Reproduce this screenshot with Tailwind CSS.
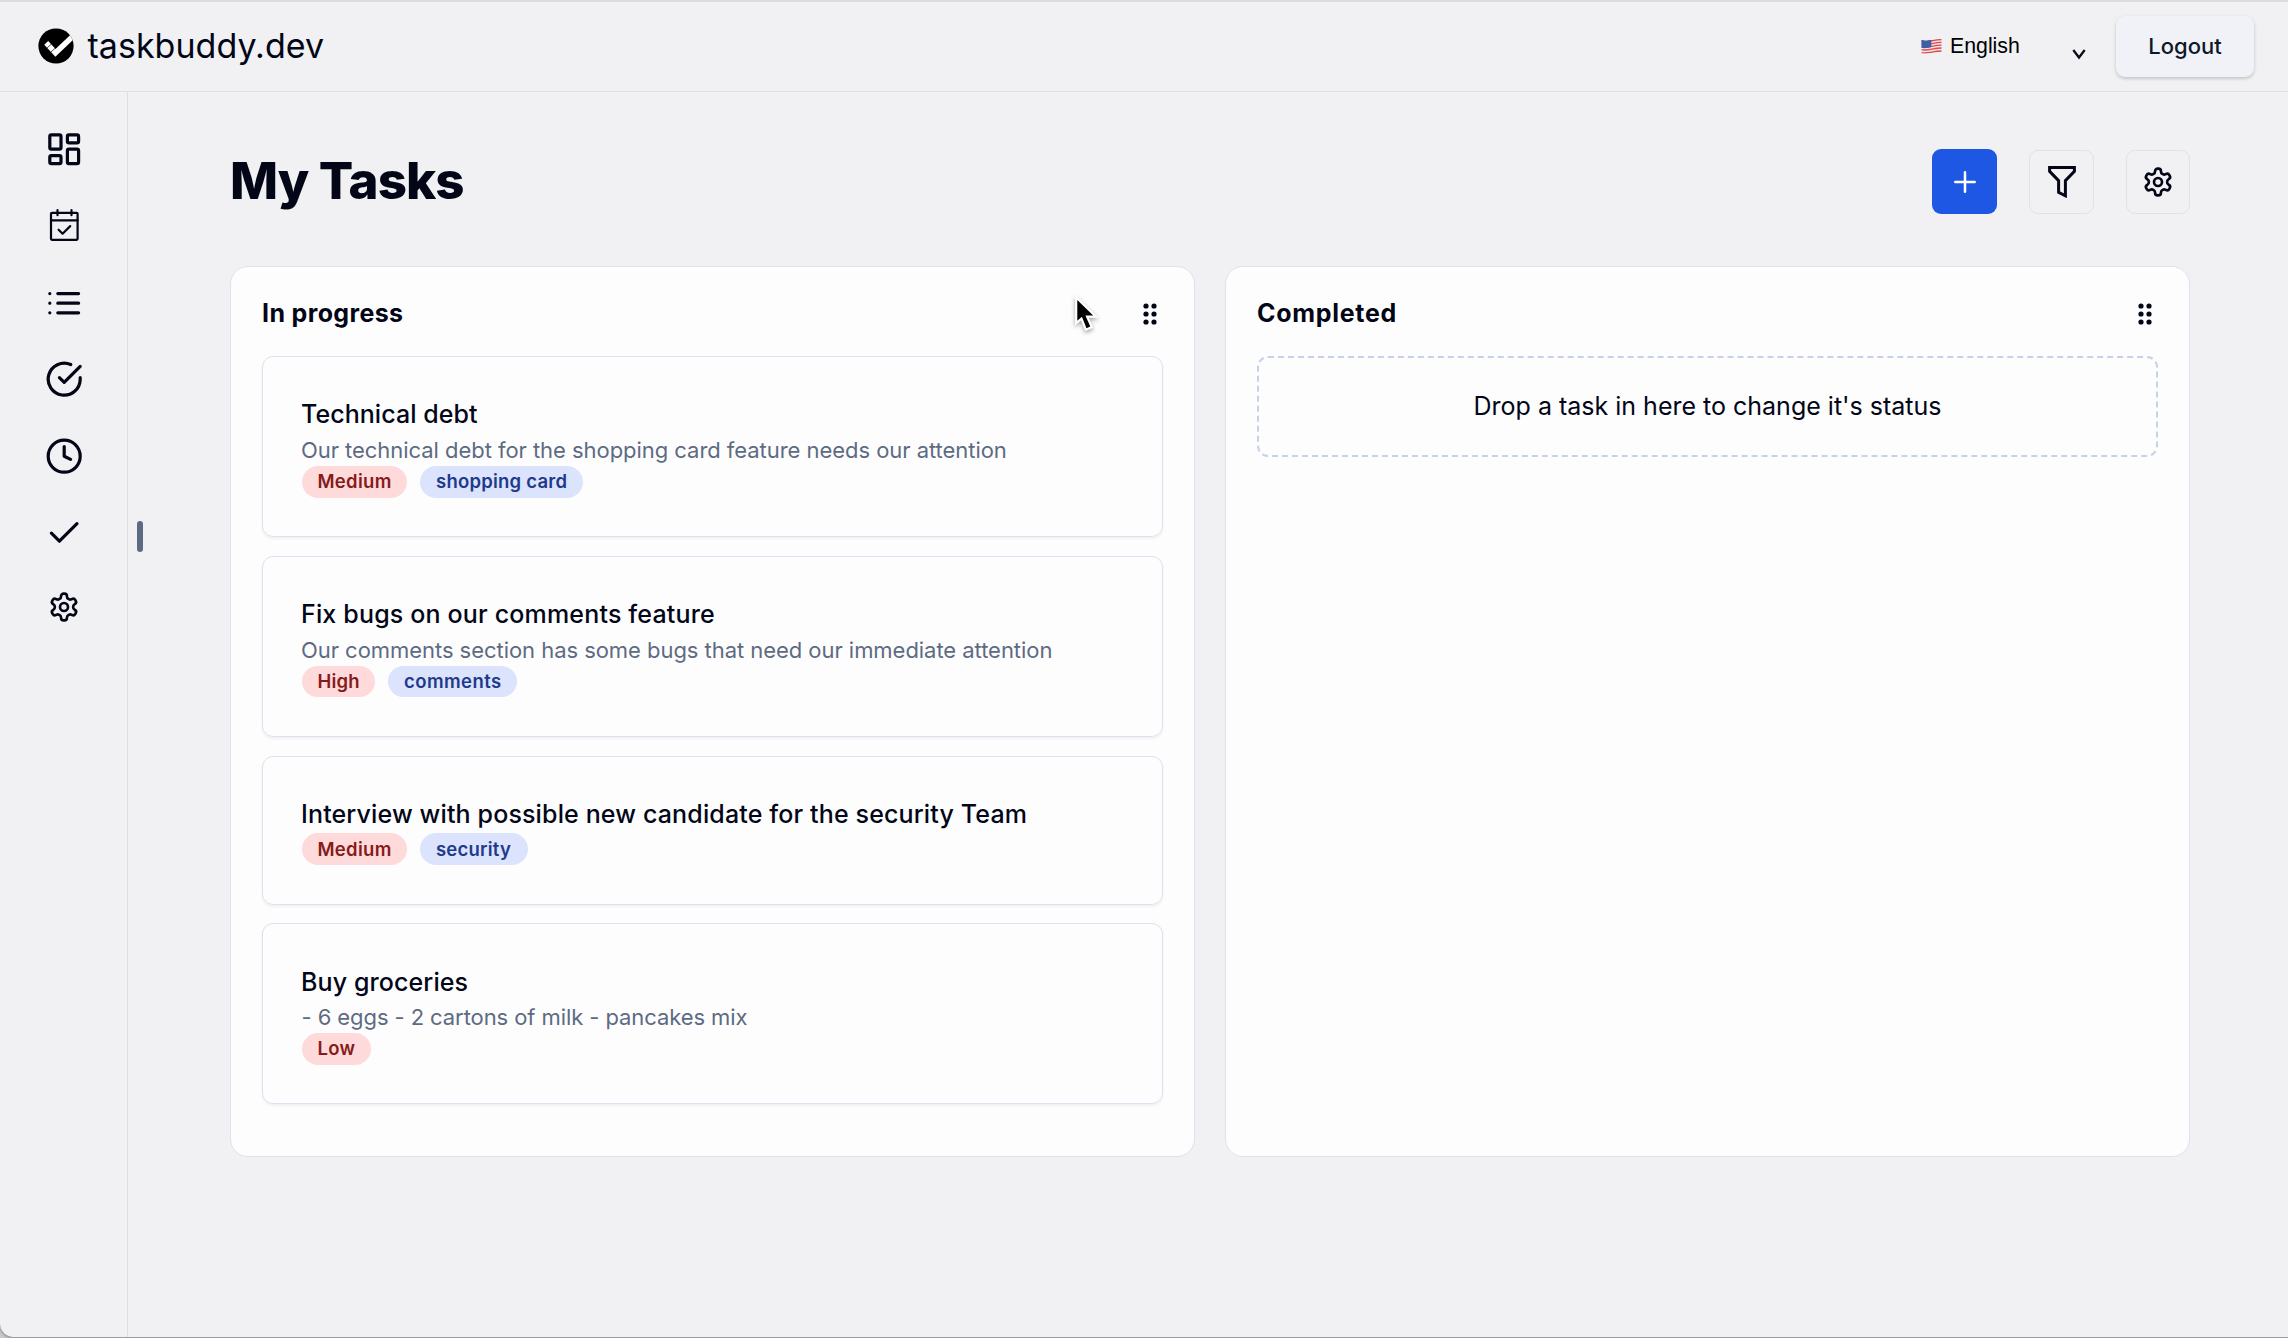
<!DOCTYPE html>
<html lang="en">
<head>
<meta charset="utf-8">
<title>taskbuddy.dev</title>
<script src="https://cdn.jsdelivr.net/npm/@tailwindcss/browser@4"></script>
</head>
<body class="bg-[#c9c9cb] font-['Inter',sans-serif] text-[#020617]">
<svg class="hidden">
  <symbol id="gear" viewBox="0 0 24 24"><path d="M12.22 2h-.44a2 2 0 0 0-2 2v.18a2 2 0 0 1-1 1.73l-.43.25a2 2 0 0 1-2 0l-.15-.08a2 2 0 0 0-2.73.73l-.22.38a2 2 0 0 0 .73 2.73l.15.1a2 2 0 0 1 1 1.72v.51a2 2 0 0 1-1 1.74l-.15.09a2 2 0 0 0-.73 2.73l.22.38a2 2 0 0 0 2.73.73l.15-.08a2 2 0 0 1 2 0l.43.25a2 2 0 0 1 1 1.73V20a2 2 0 0 0 2 2h.44a2 2 0 0 0 2-2v-.18a2 2 0 0 1 1-1.73l.43-.25a2 2 0 0 1 2 0l.15.08a2 2 0 0 0 2.73-.73l.22-.39a2 2 0 0 0-.73-2.73l-.15-.08a2 2 0 0 1-1-1.74v-.5a2 2 0 0 1 1-1.74l.15-.09a2 2 0 0 0 .73-2.73l-.22-.38a2 2 0 0 0-2.73-.73l-.15.08a2 2 0 0 1-2 0l-.43-.25a2 2 0 0 1-1-1.73V4a2 2 0 0 0-2-2z"/><circle cx="12" cy="12" r="3"/></symbol>
  <symbol id="grip" viewBox="0 0 16 24"><g fill="currentColor" stroke="none"><circle cx="4" cy="4" r="2.6"/><circle cx="12" cy="4" r="2.6"/><circle cx="4" cy="12" r="2.6"/><circle cx="12" cy="12" r="2.6"/><circle cx="4" cy="20" r="2.6"/><circle cx="12" cy="20" r="2.6"/></g></symbol>
</svg>
<div class="relative flex h-[1338px] w-[2288px] flex-col overflow-hidden rounded-bl-[14px] border-b border-[#9c9c9e] bg-[#f1f1f3] shadow-[0_0_3px_#777]">
  <header class="flex h-[92px] shrink-0 items-center border-t-2 border-b border-t-[#dcdcde] border-b-[#dfdfe2] pl-[38px] pr-[34px]">
    <svg class="-mt-[1px] size-[36px]" viewBox="0 0 36 36"><defs><clipPath id="disc"><circle cx="18" cy="18" r="17.6"/></clipPath></defs><circle cx="18" cy="18" r="17.6" fill="#000"/><g clip-path="url(#disc)"><path d="M8.2 14.8 17.5 24.8 36 7.2" fill="none" stroke="#fff" stroke-width="5.4"/><path d="M8.5 20.5 15 14.5M12.5 24.5 19.5 18" stroke="#000" stroke-width=".7"/></g></svg>
    <span class="ml-[13.5px] -mt-[1px] text-[34px] leading-[40px] tracking-[0.03px]">taskbuddy.dev</span>
    <div class="ml-auto flex items-center">
      <svg class="mr-[8px] -mt-[2px] h-[16px] w-[21px]" viewBox="0 0 21 16"><defs><clipPath id="flag"><path d="M.5 1.8C7 3.8 12 .2 20.5.7V14.2C13 13.6 8 17 .5 15.2Z"/></clipPath></defs><g clip-path="url(#flag)"><path fill="#f3e4e6" d="M0 0h21v16H0z"/><path d="M0 3.2C7 5 12 1.4 21 1.6M0 6C7 7.8 12 4.2 21 4.4M0 8.8C7 10.6 12 7 21 7.2M0 11.6C7 13.4 12 9.8 21 10M0 14.6C7 16.2 12 12.8 21 13" fill="none" stroke="#dc4a50" stroke-width="1.35"/><path d="M0 1.2C4 3 7 1.9 10.3 1.2V9C7 9.8 4 10.6 0 9.8Z" fill="#3b5fa8"/></g></svg>
      <span class="-mt-[1px] w-[122px] font-['Liberation_Sans',sans-serif] text-[21.3px] leading-[26px] text-black">English</span>
      <svg class="mt-[14px] h-[12px] w-[14px]" viewBox="0 0 14 12" fill="none" stroke="#0b0d1a" stroke-width="2.3"><path d="M1.3 2 7 9.5 12.7 2"/></svg>
      <button class="ml-[30px] h-[61px] w-[138px] rounded-[9px] bg-[#f1f2f7] text-[22px] font-medium text-[#0f172a] shadow-[0_1px_5px_rgba(0,0,0,0.08),0_2px_3px_rgba(0,0,0,0.12)]">Logout</button>
    </div>
  </header>
  <div class="flex flex-1">
    <nav class="flex w-[128px] shrink-0 flex-col items-center border-r border-[#dfdfe2] pl-[1px] [&>svg]:shrink-0">
      <svg class="mt-[38px] size-[38.4px]" viewBox="0 0 24 24" fill="none" stroke="currentColor" stroke-width="2" stroke-linecap="round" stroke-linejoin="round"><rect x="3" y="3" width="7" height="9" rx="1"/><rect x="14" y="3" width="7" height="5" rx="1"/><rect x="14" y="12" width="7" height="9" rx="1"/><rect x="3" y="16" width="7" height="5" rx="1"/></svg>
      <svg class="mt-[40px] h-[34px] w-[32px]" viewBox="0 0 32 34" fill="none" stroke="currentColor" stroke-width="2.2" stroke-linecap="round" stroke-linejoin="round"><rect x="3" y="4.8" width="26.6" height="27" rx="1"/><path d="M3 12.3h26.6M9.5 2.2v5M23.5 2.2v5M10.6 21.7l4 4 7.6-7.6"/></svg>
      <svg class="mt-[41.5px] size-[38.4px]" viewBox="0 0 24 24" fill="none" stroke="currentColor" stroke-width="2" stroke-linecap="round" stroke-linejoin="round"><path d="M8 6h13M8 12h13M8 18h13M3 6h.01M3 12h.01M3 18h.01"/></svg>
      <svg class="mt-[37.6px] size-[38.4px]" viewBox="0 0 24 24" fill="none" stroke="currentColor" stroke-width="2" stroke-linecap="round" stroke-linejoin="round"><path d="M22 11.08V12a10 10 0 1 1-5.93-9.14"/><path d="m9 11 3 3L22 4"/></svg>
      <svg class="mt-[38.6px] size-[38.4px]" viewBox="0 0 24 24" fill="none" stroke="currentColor" stroke-width="2" stroke-linecap="round" stroke-linejoin="round"><circle cx="12" cy="12" r="10"/><path d="M12 6v6l4 2"/></svg>
      <svg class="mt-[39px] size-[38.4px]" viewBox="0 0 24 24" fill="none" stroke="currentColor" stroke-width="2" stroke-linecap="round" stroke-linejoin="round"><path d="M20 6 9 17l-5-5"/></svg>
      <svg class="mt-[38px] size-[32px] fill-none stroke-current stroke-2 [stroke-linecap:round] [stroke-linejoin:round]"><use href="#gear"/></svg>
    </nav>
    <div class="ml-[9px] mt-[429px] h-[31px] w-[6px] rounded-[3px] bg-[#5d6b82]"></div>
    <main class="ml-[87px] w-[1960px]">
      <div class="mt-[57px] flex h-[65px] items-center">
        <h1 class="-mt-[1px] text-[51px] font-extrabold leading-[66px] tracking-[-0.9px]">My Tasks</h1>
        <button class="ml-auto flex size-[65px] items-center justify-center rounded-[9px] bg-[#1f57e5]"><svg class="size-[24px]" viewBox="0 0 24 24" stroke="#fff" stroke-width="2.5" stroke-linecap="round"><path d="M12 2.3v19.4M2.3 12h19.4"/></svg></button>
        <button class="ml-[32px] mt-[1px] flex h-[64px] w-[65px] items-center justify-center rounded-[9px] border border-[#e0e2e9]"><svg class="h-[32px] w-[28px]" viewBox="0 0 28 32" fill="none" stroke="currentColor" stroke-width="3"><path d="M1.6 1.5H26.4V5.4L17.4 14.6V29.8L10.6 26.4V14.6L1.6 5.4Z"/></svg></button>
        <button class="ml-[32px] mt-[1px] flex size-[64px] items-center justify-center rounded-[9px] border border-[#dee2ec]"><svg class="size-[32px] fill-none stroke-current stroke-2 [stroke-linecap:round] [stroke-linejoin:round]"><use href="#gear"/></svg></button>
      </div>
      <div class="mt-[52px] grid grid-cols-[965px_965px] gap-[30px]">
        <section class="h-[891px] rounded-[18px] border border-[#dde2ee] bg-[#fdfdfe] px-[31px]">
          <div class="flex h-[89px] items-center justify-between pt-[4px] pr-[5px]"><h2 class="-mt-[1px] text-[25px] font-bold leading-[32px] tracking-[0.36px]">In progress</h2><svg class="h-[24px] w-[16px]"><use href="#grip"/></svg></div>
          <div class="flex flex-col">
            <article class="mb-[19px] h-[181px] rounded-[11px] border border-[#dbe1ee] px-[39px] pt-[39px] shadow-[0_2px_3px_rgba(0,0,0,0.05)]">
              <h3 class="-ml-[1px] text-[25px] font-medium leading-[37px] tracking-[0.06px]">Technical debt</h3>
              <p class="-ml-[1px] pt-[1px] text-[22px] leading-[32px] tracking-[-0.045px] text-[#5d6b82]">Our technical debt for the shopping card feature needs our attention</p>
              <div class="flex gap-[13px] text-[18.5px] font-semibold leading-[31px]"><span class="h-[32px] w-[105px] rounded-full bg-[#ffdada] pl-[15.5px] tracking-[0.3px] text-[#861b1b]">Medium</span><span class="h-[32px] w-[163px] rounded-full bg-[#dbe3fd] pl-[16px] tracking-[0.23px] text-[#1e3a8a]">shopping card</span></div>
            </article>
            <article class="mb-[19px] h-[181px] rounded-[11px] border border-[#dbe1ee] px-[39px] pt-[39px] shadow-[0_2px_3px_rgba(0,0,0,0.05)]">
              <h3 class="-ml-[1px] text-[25px] font-medium leading-[37px] tracking-[0.17px]">Fix bugs on our comments feature</h3>
              <p class="-ml-[1px] pt-[1px] text-[22px] leading-[32px] tracking-[-0.045px] text-[#5d6b82]">Our comments section has some bugs that need our immediate attention</p>
              <div class="flex gap-[13px] text-[18.5px] font-semibold leading-[31px]"><span class="h-[31px] w-[73px] rounded-full bg-[#ffdada] pl-[15.5px] tracking-[0.15px] text-[#861b1b]">High</span><span class="h-[31px] w-[129px] rounded-full bg-[#dbe3fd] pl-[16px] tracking-[0.43px] text-[#1e3a8a]">comments</span></div>
            </article>
            <article class="mb-[18px] h-[149px] rounded-[11px] border border-[#dbe1ee] px-[39px] pt-[39px] shadow-[0_2px_3px_rgba(0,0,0,0.05)]">
              <h3 class="-ml-[1px] text-[25px] font-medium leading-[37px] tracking-[0.14px]">Interview with possible new candidate for the security Team</h3>
              <div class="flex gap-[13px] text-[18.5px] font-semibold leading-[32px]"><span class="h-[32px] w-[105px] rounded-full bg-[#ffdada] pl-[15.5px] tracking-[0.3px] text-[#861b1b]">Medium</span><span class="h-[32px] w-[108px] rounded-full bg-[#dbe3fd] pl-[16px] tracking-[0.21px] text-[#1e3a8a]">security</span></div>
            </article>
            <article class="h-[181px] rounded-[11px] border border-[#dbe1ee] px-[39px] pt-[40px] shadow-[0_2px_3px_rgba(0,0,0,0.05)]">
              <h3 class="-ml-[1px] text-[25px] font-medium leading-[37px] tracking-[0.1px]">Buy groceries</h3>
              <p class="-ml-[0.5px] text-[22px] leading-[32px] tracking-[-0.08px] text-[#5d6b82]">- 6 eggs - 2 cartons of milk - pancakes mix</p>
              <div class="flex text-[18.5px] font-semibold leading-[31px]"><span class="h-[32px] w-[69px] rounded-full bg-[#ffdada] pl-[15.5px] tracking-[0.28px] text-[#861b1b]">Low</span></div>
            </article>
          </div>
        </section>
        <section class="h-[891px] rounded-[18px] border border-[#dde2ee] bg-[#fdfdfe] px-[31px]">
          <div class="flex h-[89px] items-center justify-between pt-[4px] pr-[5px]"><h2 class="-mt-[1px] text-[25px] font-bold leading-[32px] tracking-[0.7px]">Completed</h2><svg class="h-[24px] w-[16px]"><use href="#grip"/></svg></div>
          <div class="flex h-[101px] items-center justify-center rounded-[11px] border-2 border-dashed border-[#c6d1ea]"><p class="-mt-[2px] text-[25px] leading-[36px]">Drop a task in here to change it's status</p></div>
        </section>
      </div>
    </main>
  </div>
  <svg class="absolute left-[1070px] top-[292px] h-[48px] w-[36px] drop-shadow-[0_2px_2px_rgba(0,0,0,0.35)]" viewBox="0 0 36 48"><path d="M7.3 8V28.7L11.9 24.7 16.5 36.2 20.3 34.6 15.4 23.6H23.2Z" fill="#000" stroke="#fff" stroke-width="4.4" paint-order="stroke"/></svg>
</div>
</body>
</html>
